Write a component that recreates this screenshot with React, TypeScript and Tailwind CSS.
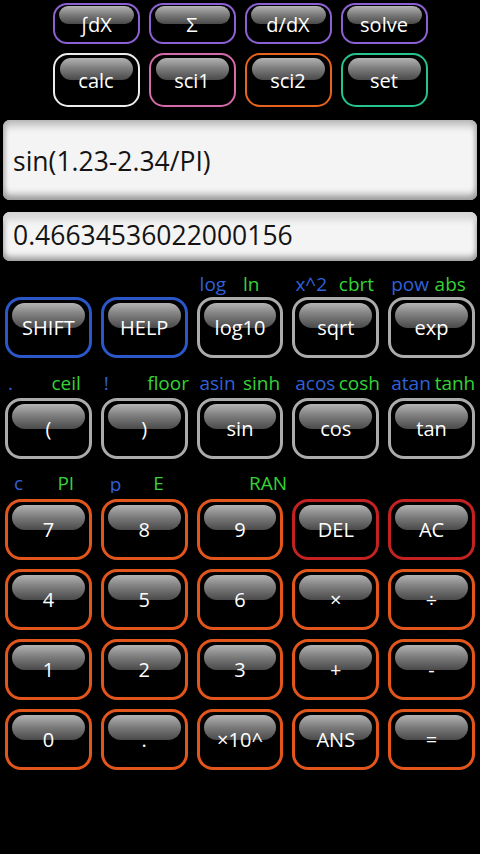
import React from "react";

type BtnProps = {
  label: string;
  border: string;
  size: "s1" | "s2" | "big";
};

function Btn({ label, border, size }: BtnProps) {
  if (size === "s1") {
    return (
      <div className={`relative w-[87px] h-[41px] rounded-[14px] border-2 bg-black flex items-center justify-center ${border}`}>
        <div className="absolute left-[4px] right-[4px] top-[1px] h-[18px] rounded-full bg-linear-to-b from-[#b4b4b4] via-[#7a7a7a] to-[#4a4a4a]" />
        <span className="relative text-white text-[20px] leading-none mt-[2px]">{label}</span>
      </div>
    );
  }
  if (size === "s2") {
    return (
      <div className={`relative w-[87px] h-[54px] rounded-[15px] border-2 bg-black flex items-center justify-center ${border}`}>
        <div className="absolute left-[5px] right-[5px] top-[3px] h-[22px] rounded-full bg-linear-to-b from-[#b4b4b4] via-[#7a7a7a] to-[#4a4a4a]" />
        <span className="relative text-white text-[20px] leading-none mt-[2px]">{label}</span>
      </div>
    );
  }
  return (
    <div className={`relative w-[87px] h-[61px] rounded-[16px] border-[3px] bg-black flex items-center justify-center ${border}`}>
      <div className="absolute left-[4px] right-[4px] top-[3px] h-[25px] rounded-full bg-linear-to-b from-[#b4b4b4] via-[#7a7a7a] to-[#4a4a4a]" />
      <span className="relative text-white text-[20px] leading-none">{label}</span>
    </div>
  );
}

type Lbl = { t: string; c: "b" | "g"; clip?: boolean } | null;

function LabelCell({ l, pad }: { l: Lbl; pad: string }) {
  return (
    <div className={`w-1/2 flex items-end whitespace-nowrap ${pad}`}>
      {l ? (
        l.clip ? (
          <span className="inline-block h-[18px] overflow-hidden">
            <span className={`block text-[19px] leading-[19px] ${l.c === "b" ? "text-[#3161d8]" : "text-[#36d236]"}`}>{l.t}</span>
          </span>
        ) : (
          <span className={`text-[19px] leading-[19px] ${l.c === "b" ? "text-[#3161d8]" : "text-[#36d236]"}`}>{l.t}</span>
        )
      ) : null}
    </div>
  );
}

function LabelRow({ labels, pad }: { labels: Lbl[]; pad: string }) {
  const cols = [0, 1, 2, 3, 4];
  return (
    <div className="flex gap-[9px] px-[5px] h-full items-end">
      {cols.map((i) => (
        <div key={i} className="w-[87px] flex items-end">
          <LabelCell l={labels[i * 2]} pad={pad} />
          <LabelCell l={labels[i * 2 + 1]} pad={pad} />
        </div>
      ))}
    </div>
  );
}

const GRAY = "border-[#ababab]";
const ORANGE = "border-[#e2561c]";
const RED = "border-[#c42222]";
const BLUE = "border-[#2b57c8]";

export default function App() {
  return (
    <div
      className="w-[480px] h-[854px] bg-black overflow-hidden"
      style={{ fontFamily: '"Open Sans", "Noto Sans", sans-serif' }}
    >
      <div className="pt-[3px] flex justify-center gap-[9px]">
        <Btn label="∫dX" border="border-[#8c5fd4]" size="s1" />
        <Btn label="Σ" border="border-[#8c5fd4]" size="s1" />
        <Btn label="d/dX" border="border-[#8c5fd4]" size="s1" />
        <Btn label="solve" border="border-[#8c5fd4]" size="s1" />
      </div>
      <div className="mt-[9px] flex justify-center gap-[9px]">
        <Btn label="calc" border="border-[#ececec]" size="s2" />
        <Btn label="sci1" border="border-[#d46aa8]" size="s2" />
        <Btn label="sci2" border="border-[#e8641e]" size="s2" />
        <Btn label="set" border="border-[#24c48c]" size="s2" />
      </div>

      <div className="mt-[13px] mx-[3px] h-[80px] rounded-[7px] bg-[#f4f4f4] shadow-[inset_0_9px_8px_-4px_#b4b4b4,inset_0_-8px_7px_-3px_#9a9a9a,inset_4px_0_4px_-2px_#b8b8b8,inset_-4px_0_4px_-2px_#b8b8b8] flex items-center pl-[10px] pt-[2px]">
        <span className="text-[26.5px] leading-none text-[#141414]">sin(1.23-2.34/PI)</span>
      </div>
      <div className="mt-[12px] mx-[3px] h-[49px] rounded-[7px] bg-[#f4f4f4] shadow-[inset_0_14px_6px_-6px_#d8d8d8,inset_0_-7px_6px_-3px_#9a9a9a,inset_4px_0_4px_-2px_#b8b8b8,inset_-4px_0_4px_-2px_#b8b8b8] flex items-center pl-[10px] pb-[3px]">
        <span className="text-[26.5px] leading-none text-[#141414]">0.46634536022000156</span>
      </div>

      <div className="h-[36px] pb-[3px]">
        <LabelRow
          pad="pl-[3px]"
          labels={[null, null, null, null, { t: "log", c: "b" }, { t: "ln", c: "g" }, { t: "x^2", c: "b" }, { t: "cbrt", c: "g" }, { t: "pow", c: "b" }, { t: "abs", c: "g" }]}
        />
      </div>
      <div className="flex gap-[9px] px-[5px]">
        <Btn label="SHIFT" border={BLUE} size="big" />
        <Btn label="HELP" border={BLUE} size="big" />
        <Btn label="log10" border={GRAY} size="big" />
        <Btn label="sqrt" border={GRAY} size="big" />
        <Btn label="exp" border={GRAY} size="big" />
      </div>

      <div className="h-[40px] pb-[5px]">
        <LabelRow
          pad="pl-[3px]"
          labels={[{ t: ".", c: "b" }, { t: "ceil", c: "g" }, { t: "!", c: "b" }, { t: "floor", c: "g" }, { t: "asin", c: "b" }, { t: "sinh", c: "g" }, { t: "acos", c: "b" }, { t: "cosh", c: "g" }, { t: "atan", c: "b" }, { t: "tanh", c: "g" }]}
        />
      </div>
      <div className="flex gap-[9px] px-[5px]">
        <Btn label="(" border={GRAY} size="big" />
        <Btn label=")" border={GRAY} size="big" />
        <Btn label="sin" border={GRAY} size="big" />
        <Btn label="cos" border={GRAY} size="big" />
        <Btn label="tan" border={GRAY} size="big" />
      </div>

      <div className="h-[40px] pb-[6px]">
        <LabelRow
          pad="pl-[9px]"
          labels={[{ t: "c", c: "b" }, { t: "PI", c: "g" }, { t: "p", c: "b", clip: true }, { t: "E", c: "g" }, null, { t: "RAN", c: "g" }, null, null, null, null]}
        />
      </div>
      <div className="flex flex-col gap-[9px]">
        <div className="flex gap-[9px] px-[5px]">
          <Btn label="7" border={ORANGE} size="big" />
          <Btn label="8" border={ORANGE} size="big" />
          <Btn label="9" border={ORANGE} size="big" />
          <Btn label="DEL" border={RED} size="big" />
          <Btn label="AC" border={RED} size="big" />
        </div>
        <div className="flex gap-[9px] px-[5px]">
          <Btn label="4" border={ORANGE} size="big" />
          <Btn label="5" border={ORANGE} size="big" />
          <Btn label="6" border={ORANGE} size="big" />
          <Btn label="×" border={ORANGE} size="big" />
          <Btn label="÷" border={ORANGE} size="big" />
        </div>
        <div className="flex gap-[9px] px-[5px]">
          <Btn label="1" border={ORANGE} size="big" />
          <Btn label="2" border={ORANGE} size="big" />
          <Btn label="3" border={ORANGE} size="big" />
          <Btn label="+" border={ORANGE} size="big" />
          <Btn label="-" border={ORANGE} size="big" />
        </div>
        <div className="flex gap-[9px] px-[5px]">
          <Btn label="0" border={ORANGE} size="big" />
          <Btn label="." border={ORANGE} size="big" />
          <Btn label="×10^" border={ORANGE} size="big" />
          <Btn label="ANS" border={ORANGE} size="big" />
          <Btn label="=" border={ORANGE} size="big" />
        </div>
      </div>
    </div>
  );
}
